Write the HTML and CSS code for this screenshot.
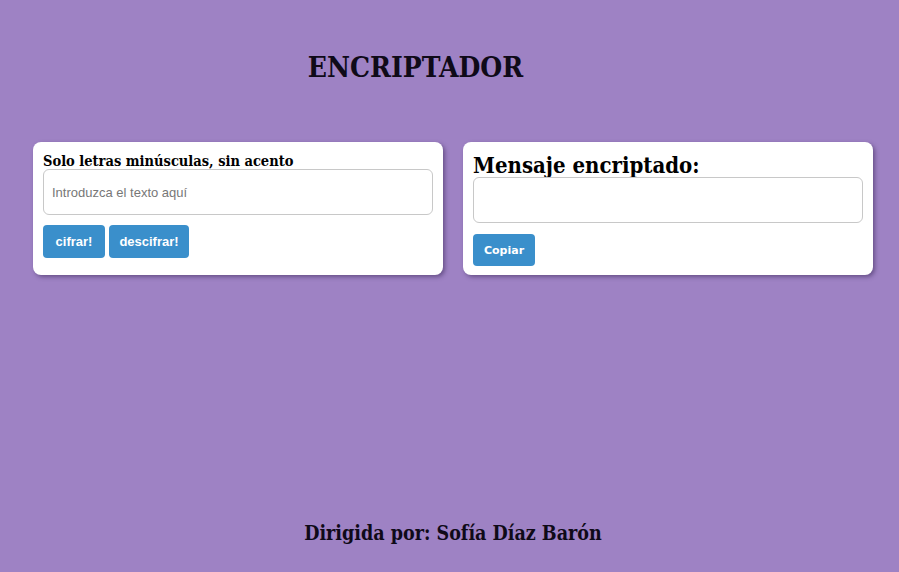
FILE: index.html
```html
<!DOCTYPE html>
<html lang="es">
<head>
<meta charset="utf-8">
<title>Encriptador</title>
<link rel="stylesheet" href="styles.css">
</head>
<body>
<header class="top">
  <h1 class="title">ENCRIPTADOR</h1>
</header>
<main class="cards">
  <section class="card">
    <label class="label" for="entrada">Solo letras minúsculas, sin acento</label>
    <input id="entrada" class="field" type="text" placeholder="Introduzca el texto aquí">
    <div class="actions">
      <button class="btn">cifrar!</button>
      <button class="btn btn-wide">descifrar!</button>
    </div>
  </section>
  <section class="card">
    <h2 class="subtitle">Mensaje encriptado:</h2>
    <textarea class="field area"></textarea>
    <div class="actions actions-right">
      <button class="btn btn-copy">Copiar</button>
    </div>
  </section>
</main>
<footer class="foot">Dirigida por: Sofía Díaz Barón</footer>
</body>
</html>
```
FILE: styles.css
```css
* { box-sizing: border-box; }
html, body { height: 100%; }
body {
  margin: 0;
  background: #9e82c4;
  font-family: "DejaVu Serif Condensed", "DejaVu Serif", serif;
  font-stretch: condensed;
  color: #000;
  display: flex;
  flex-direction: column;
}
.top {
  display: flex;
  justify-content: center;
  padding: 51px 68px 0 0;
}
.title {
  margin: 0;
  font-size: 28px;
  font-weight: bold;
  line-height: 34px;
  color: #0f0a18;
}
.cards {
  display: flex;
  gap: 20px;
  padding: 57px 26px 0 33px;
}
.card {
  flex: 1;
  background: #fff;
  border-radius: 8px;
  box-shadow: 2px 2px 4px rgba(60, 40, 90, 0.55);
  padding: 10px 10px 0 10px;
  height: 133px;
  display: flex;
  flex-direction: column;
}
.label {
  font-size: 14.5px;
  font-weight: bold;
  line-height: 17px;
}
.field {
  display: block;
  width: 100%;
  height: 46px;
  border: 1px solid #c8c8c8;
  border-radius: 6px;
  font-family: "Liberation Sans", Arial, sans-serif;
  font-stretch: normal;
  font-size: 13px;
  padding: 0 8px;
  color: #333;
  background: #fff;
}
.field::placeholder { color: #777; }
.area { resize: none; padding: 8px; background: transparent; }
.actions {
  display: flex;
  gap: 4px;
  margin-top: 10px;
}
.actions-right { margin-top: 11px; }
.btn {
  background: #3a8fcb;
  color: #fff;
  border: none;
  border-radius: 4px;
  height: 33px;
  width: 62px;
  font-family: "Liberation Sans", Arial, sans-serif;
  font-stretch: normal;
  font-size: 13px;
  font-weight: bold;
  padding: 0;
}
.btn-wide { width: 80px; }
.btn-copy {
  height: 32px;
  font-family: "DejaVu Sans", Verdana, sans-serif;
  font-size: 11px;
}
.subtitle {
  margin: 0 0 -2px;
  font-size: 22px;
  font-weight: bold;
  line-height: 27px;
}
.foot {
  margin-top: auto;
  text-align: center;
  font-size: 19.5px;
  font-weight: bold;
  line-height: 26px;
  padding: 0 0 25px 7px;
  color: #0f0a18;
}
```
